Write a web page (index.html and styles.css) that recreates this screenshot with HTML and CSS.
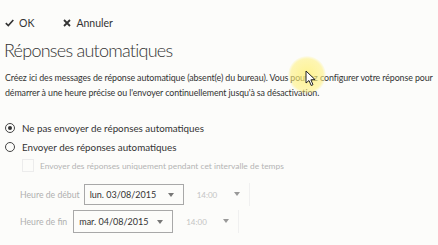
FILE: index.html
```html
<!DOCTYPE html>
<html lang="fr">
<head>
    <meta charset="UTF-8">
    <title>Réponses automatiques</title>
    <link rel="stylesheet" href="styles.css">
</head>
<body>

<div class="toolbar">
    <button class="tool">
        <svg width="9" height="8" viewBox="0 0 9 8"><path d="M0.8 4.2 L3.3 6.6 L8.3 1" fill="none" stroke="#333" stroke-width="1.6"/></svg>
        OK
    </button>
    <button class="tool">
        <svg width="8" height="8" viewBox="0 0 8 8"><path d="M1 1 L7 7 M7 1 L1 7" fill="none" stroke="#333" stroke-width="1.8"/></svg>
        Annuler
    </button>
</div>

<h1 class="title">Réponses automatiques</h1>

<p class="intro">Créez ici des messages de réponse automatique (absent(e) du bureau). Vous pouvez configurer votre réponse pour démarrer à une heure précise ou l'envoyer continuellement jusqu'à sa désactivation.</p>

<div class="options">
    <label class="radio"><span class="dot checked"></span>Ne pas envoyer de réponses automatiques</label>
    <label class="radio"><span class="dot"></span>Envoyer des réponses automatiques</label>
    <label class="check disabled"><span class="box"></span>Envoyer des réponses uniquement pendant cet intervalle de temps</label>

    <div class="when">
        <div class="row">
            <span class="lbl">Heure de début</span>
            <div class="select">lun. 03/08/2015<span class="arrow"></span></div>
            <div class="time">14:00<span class="arrow"></span></div>
        </div>
        <div class="row">
            <span class="lbl">Heure de fin</span>
            <div class="select">mar. 04/08/2015<span class="arrow"></span></div>
            <div class="time">14:00<span class="arrow"></span></div>
        </div>
    </div>
</div>

<div class="pointer">
    <svg width="12" height="17" viewBox="0 0 12 17"><path d="M1 1 L1 13 L4 10.5 L6.2 15.5 L8 14.7 L5.9 9.8 L10 9.6 Z" fill="#fff" stroke="#222" stroke-width="1"/></svg>
</div>

</body>
</html>
```

FILE: styles.css
```css
body {
    margin: 0;
    width: 438px;
    height: 245px;
    overflow: hidden;
    background: #fcfcfa;
    font-family: Lato, "Open Sans", sans-serif;
    color: #333;
    position: relative;
}
.toolbar {
    display: flex;
    gap: 29px;
    padding: 15px 0 0 5px;
    height: 15px;
}
.tool {
    display: flex;
    align-items: center;
    gap: 5px;
    border: 0;
    background: none;
    padding: 0;
    font-family: inherit;
    font-size: 10.5px;
    color: #333;
}
.title {
    margin: 7px 0 0 4px;
    font-size: 18px;
    letter-spacing: -0.75px;
    font-weight: 300;
    color: #333;
    line-height: 26px;
}
.intro {
    margin: 7px 0 0 5px;
    width: 433px;
    font-size: 8.85px;
    letter-spacing: -0.1px;
    line-height: 15px;
    color: #333;
}
.options {
    margin-top: 18px;
    padding-left: 5px;
    font-size: 9.8px;
}
.radio, .check {
    display: flex;
    align-items: center;
    height: 19px;
    color: #333;
}
.dot {
    width: 8px;
    height: 8px;
    border: 1px solid #444;
    border-radius: 50%;
    margin-right: 7px;
    position: relative;
}
.dot.checked::after {
    content: "";
    position: absolute;
    left: 2px;
    top: 2px;
    width: 4px;
    height: 4px;
    border-radius: 50%;
    background: #333;
}
.check {
    padding-left: 17px;
    font-size: 8.4px;
}
.check.disabled {
    color: #b4b4b4;
}
.box {
    width: 10px;
    height: 11px;
    border: 1px solid #ececec;
    margin-right: 6px;
}
.when {
    margin-top: 6px;
    padding-left: 15px;
    font-size: 8.7px;
}
.row {
    display: flex;
    align-items: center;
    height: 27px;
}
.lbl {
    color: #b0b0b0;
    margin-right: 4px;
}
.select {
    width: 100px;
    height: 21px;
    box-sizing: border-box;
    border: 1px solid #a8a8a8;
    display: flex;
    align-items: center;
    padding-left: 5px;
    font-size: 9px;
    color: #333;
    position: relative;
}
.row + .row .select {
    height: 23px;
    margin-left: 2px;
}
.time {
    width: 66px;
    height: 23px;
    box-sizing: border-box;
    border-right: 1px solid #f0f0f0;
    display: flex;
    align-items: center;
    padding-left: 13px;
    font-size: 8px;
    color: #c4c4c4;
    position: relative;
}
.arrow {
    position: absolute;
    right: 9px;
    top: 8px;
    border-left: 3.5px solid transparent;
    border-right: 3.5px solid transparent;
    border-top: 4px solid #777;
}
.row + .row .select .arrow {
    top: 9px;
}
.time .arrow {
    top: 9px;
    border-top-color: #999;
}
.pointer {
    position: absolute;
    left: 288px;
    top: 56px;
    width: 38px;
    height: 38px;
    border-radius: 50%;
    background: radial-gradient(circle, rgba(255, 240, 110, 0.75) 0%, rgba(255, 240, 120, 0.55) 60%, rgba(255, 245, 150, 0) 72%);
}
.pointer svg {
    position: absolute;
    left: 17px;
    top: 14px;
}
```
